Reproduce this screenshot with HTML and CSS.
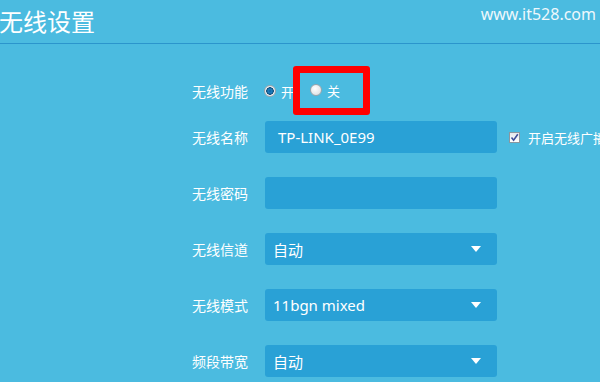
FILE: index.html
```html
<!DOCTYPE html>
<html lang="zh-CN">
<head>
    <meta charset="UTF-8">
    <title>无线设置</title>
    <link rel="stylesheet" href="styles.css">
</head>
<body>

    <header>
        <h1>无线设置</h1>
        <span class="site">www.it528.com</span>
    </header>

    <main class="form">
        <!-- 无线功能 -->
        <div class="row row-radio">
            <label class="name">无线功能</label>
            <div class="radios">
                <span class="radio checked"></span>
                <span class="opt">开</span>
                <span class="mark">
                    <span class="radio"></span>
                    <span class="opt">关</span>
                </span>
            </div>
        </div>

        <div class="row">
            <label class="name">无线名称</label>
            <div class="field">TP-LINK_0E99</div>
            <div class="extra">
                <span class="check">
                    <svg width="9" height="9" viewBox="0 0 9 9"><path d="M1.5 4.5 L3.6 7.2 L7.8 1.2" fill="none" stroke="#3d4f9a" stroke-width="1.6"/></svg>
                </span>
                <span>开启无线广播</span>
            </div>
        </div>

        <div class="row">
            <label class="name">无线密码</label>
            <div class="field"></div>
        </div>

        <div class="row">
            <label class="name">无线信道</label>
            <div class="field select">自动<span class="arrow"></span></div>
        </div>

        <div class="row">
            <label class="name">无线模式</label>
            <div class="field select">11bgn mixed<span class="arrow"></span></div>
        </div>

        <div class="row">
            <label class="name">频段带宽</label>
            <div class="field select">自动<span class="arrow"></span></div>
        </div>
    </main>

</body>
</html>
```

FILE: styles.css
```css
html, body {
    margin: 0;
    height: 100%;
    overflow: hidden;
}

body {
    background-color: #4bbbe0;
    color: #ffffff;
    font-family: "Noto Sans", "Noto Sans CJK SC", sans-serif;
}

header {
    height: 43px;
    border-bottom: 1px solid #2b95cc;
    display: flex;
    align-items: center;
    justify-content: space-between;
    padding: 0 4px 0 0;
}

header h1 {
    margin: 0 0 2px -1px;
    font-size: 24px;
    font-weight: normal;
}

.site {
    font-size: 16px;
    color: #eef8fc;
    margin-top: -16px;
}

.form {
    padding: 31px 0 0 192px;
}

.row {
    display: flex;
    align-items: center;
    height: 32px;
    margin-bottom: 24px;
}

.row-radio {
    margin-bottom: 14px;
}

.name {
    width: 73px;
    flex-shrink: 0;
    font-size: 14px;
}

.radios {
    display: flex;
    align-items: center;
    font-size: 13px;
}

.radio {
    width: 10px;
    height: 10px;
    border-radius: 50%;
    border: 1px solid #9aa4ab;
    background: radial-gradient(circle at 40% 35%, #ffffff, #d5d9dc);
    display: inline-block;
    flex-shrink: 0;
}

.radio.checked {
    margin-left: -1px;
    background: radial-gradient(circle, #0b5f9c 0, #1d7fc0 2px, #0b4b78 3.5px, #e8eef2 4px);
}

.opt {
    margin-left: 5px;
}

.mark {
    display: flex;
    align-items: center;
    border: 7px solid #ff0000;
    border-radius: 3px;
    height: 35px;
    width: 53px;
    margin-left: -1px;
    padding-left: 10px;
    margin-top: -2px;
}

.field {
    width: 232px;
    height: 32px;
    flex-shrink: 0;
    box-sizing: border-box;
    background-color: #29a1d6;
    border-radius: 3px;
    padding: 0 12px 0 13px;
    display: flex;
    align-items: center;
    font-size: 15px;
}

.select {
    padding-left: 8px;
    justify-content: space-between;
}

.arrow {
    width: 0;
    height: 0;
    border-left: 5px solid transparent;
    border-right: 5px solid transparent;
    border-top: 6px solid #ffffff;
    margin-right: 4px;
}

.extra {
    display: flex;
    align-items: center;
    margin-left: 12px;
    font-size: 13px;
    white-space: nowrap;
}

.check {
    width: 9px;
    height: 9px;
    border: 1px solid #8a97a0;
    background: linear-gradient(#e4e8ec, #ffffff);
    display: flex;
    align-items: center;
    justify-content: center;
    margin-right: 8px;
    flex-shrink: 0;
}
```
